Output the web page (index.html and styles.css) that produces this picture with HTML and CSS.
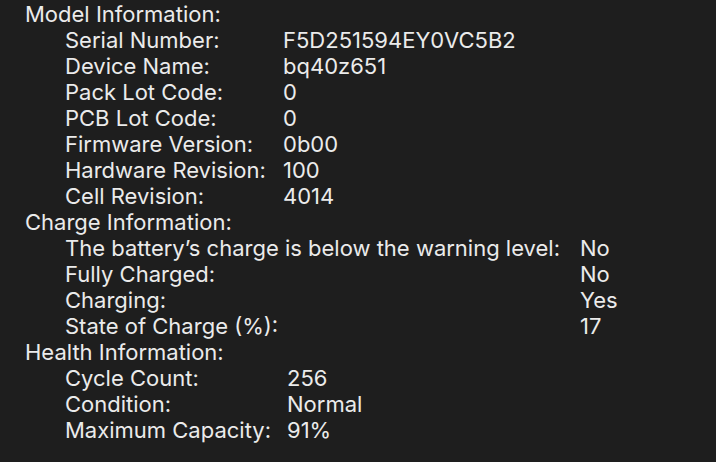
FILE: index.html
```html
<!DOCTYPE html>
<html lang="en">
<head>
    <meta charset="UTF-8">
    <title>Battery Information</title>
    <link rel="stylesheet" href="styles.css">
</head>
<body>
    <div class="info">
        <div class="section">
            <div class="title">Model Information:</div>
            <div class="rows model">
                <span>Serial Number:</span><span>F5D251594EY0VC5B2</span>
                <span>Device Name:</span><span>bq40z651</span>
                <span>Pack Lot Code:</span><span>0</span>
                <span>PCB Lot Code:</span><span>0</span>
                <span>Firmware Version:</span><span>0b00</span>
                <span>Hardware Revision:</span><span>100</span>
                <span>Cell Revision:</span><span>4014</span>
            </div>
        </div>
        <div class="section">
            <div class="title">Charge Information:</div>
            <div class="rows charge">
                <span>The battery’s charge is below the warning level:</span><span>No</span>
                <span>Fully Charged:</span><span>No</span>
                <span>Charging:</span><span>Yes</span>
                <span>State of Charge (%):</span><span>17</span>
            </div>
        </div>
        <div class="section">
            <div class="title">Health Information:</div>
            <div class="rows health">
                <span>Cycle Count:</span><span>256</span>
                <span>Condition:</span><span>Normal</span>
                <span>Maximum Capacity:</span><span>91%</span>
            </div>
        </div>
    </div>
</body>
</html>
```

FILE: styles.css
```css
* {
    padding: 0;
    margin: 0;
}

body {
    background-color: #1e1e1e;
    color: #ebebeb;
    font-family: Inter, "Noto Sans", sans-serif;
    font-size: 22px;
    line-height: 26px;
}

.info {
    padding: 1px 0 0 25px;
}

.rows {
    display: grid;
    padding-left: 40px;
}
.model {
    grid-template-columns: 218px auto;
}
.charge {
    grid-template-columns: 515px auto;
}
.health {
    grid-template-columns: 222px auto;
}
```
